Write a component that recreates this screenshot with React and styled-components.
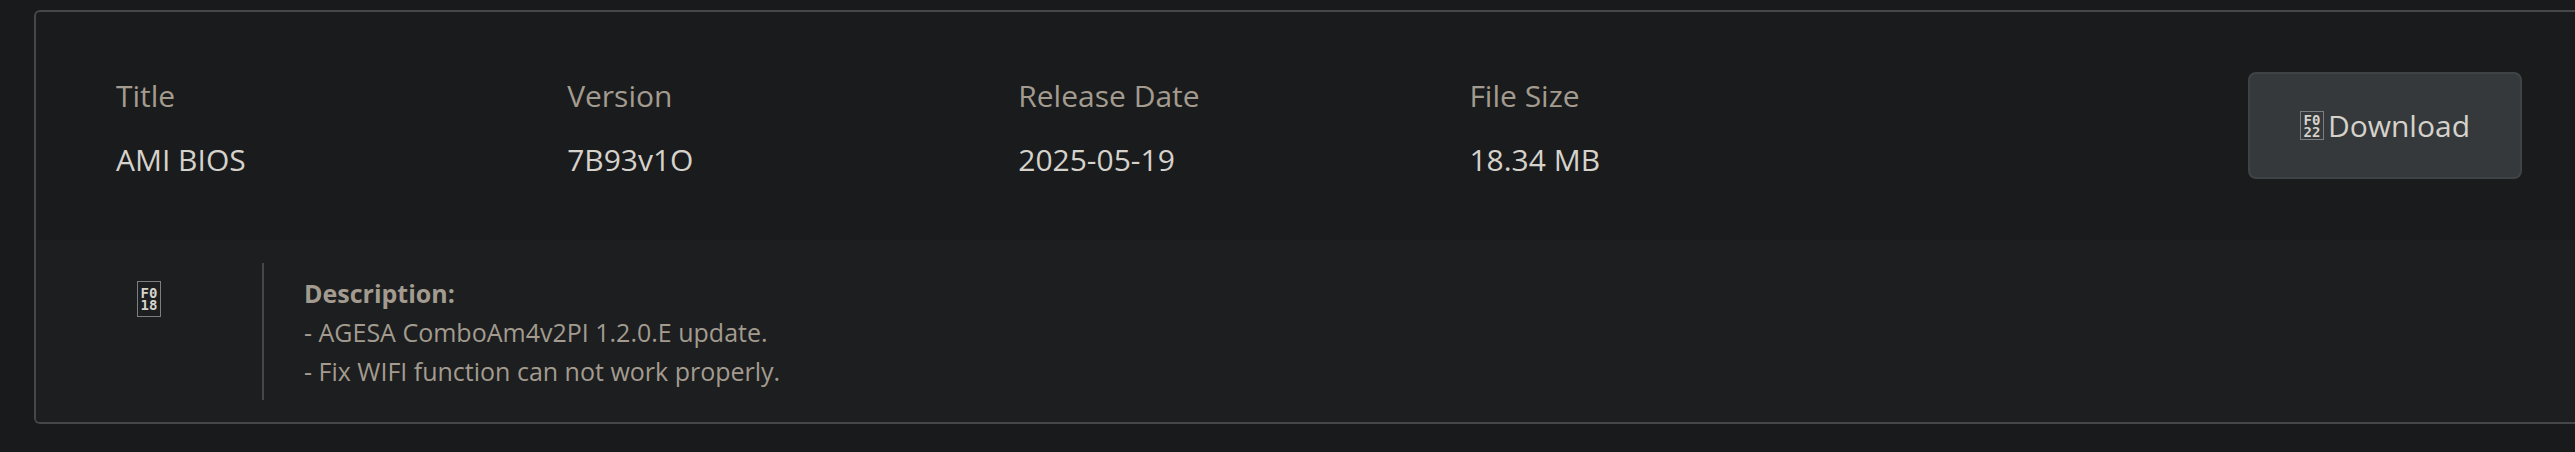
import styled, { createGlobalStyle } from "styled-components";

const details = [
    { label: "Title", value: "AMI BIOS" },
    { label: "Version", value: "7B93v1O" },
    { label: "Release Date", value: "2025-05-19" },
    { label: "File Size", value: "18.34 MB" },
];

const App = () => {
    return (
        <>
            <GlobalStyle />
            <Card>
                <Header>
                    {details.map((item) => (
                        <Detail key={item.label}>
                            <Label>{item.label}</Label>
                            <Value>{item.value}</Value>
                        </Detail>
                    ))}
                    <DownloadButton type="button">
                        <CodeBox $height={29} aria-hidden="true">
                            <span>F0</span>
                            <span>22</span>
                        </CodeBox>
                        <span>Download</span>
                    </DownloadButton>
                </Header>
                <Notes>
                    <NotesIcon>
                        <CodeBox $height={36} aria-hidden="true">
                            <span>F0</span>
                            <span>18</span>
                        </CodeBox>
                    </NotesIcon>
                    <Description>
                        <strong>Description:</strong>
                        <p>- AGESA ComboAm4v2PI 1.2.0.E update.</p>
                        <p>- Fix WIFI function can not work properly.</p>
                    </Description>
                </Notes>
            </Card>
        </>
    );
};

const GlobalStyle = createGlobalStyle`
    * {
        box-sizing: border-box;
    }
    body {
        margin: 0;
        background: #181a1b;
        font-family: "Segoe UI", "Open Sans", sans-serif;
    }
`;
const Card = styled.section`
    margin: 10px 0 28px 34px;
    border: 2px solid #454748;
    border-right: none;
    border-radius: 6px 0 0 6px;
    background: #1a1b1c;
    overflow: hidden;
`;
const Header = styled.dl`
    display: grid;
    grid-template-columns: repeat(4, 3fr) 4fr;
    align-items: start;
    margin: 0;
    padding: 60px 53px 56px 80px;
`;
const Detail = styled.div`
    display: flex;
    flex-direction: column;
    gap: 16px;
    font-size: 30px;
    line-height: 48px;
`;
const Label = styled.dt`
    color: #a39b8f;
`;
const Value = styled.dd`
    margin: 0;
    color: #d5d2cc;
`;
const DownloadButton = styled.button`
    justify-self: end;
    display: flex;
    align-items: center;
    gap: 4px;
    height: 107px;
    padding: 0 50px;
    border: 2px solid #3e4446;
    border-radius: 8px;
    background: #35393b;
    color: #d5d2cc;
    font-family: inherit;
    font-size: 30px;
    line-height: 48px;
    cursor: pointer;
`;
const CodeBox = styled.span`
    display: flex;
    flex-direction: column;
    align-items: center;
    justify-content: center;
    width: 24px;
    height: ${(props) => props.$height}px;
    border: 1px solid #7c7f80;
    color: #d5d2cc;
    font-family: "DejaVu Sans Mono", monospace;
    font-size: 14px;
    font-weight: bold;
    line-height: 12px;
`;
const Notes = styled.div`
    display: flex;
    padding: 23px 0 22px;
    background: #1c1e1f;
`;
const NotesIcon = styled.div`
    display: flex;
    justify-content: center;
    width: 226px;
    padding-top: 18px;
`;
const Description = styled.div`
    flex: 1;
    padding: 11px 40px 9px;
    border-left: 2px solid #454748;
    color: #a39b8f;
    font-size: 25px;
    line-height: 39px;
    strong {
        display: block;
    }
    p {
        margin: 0;
    }
`;

export default App;
